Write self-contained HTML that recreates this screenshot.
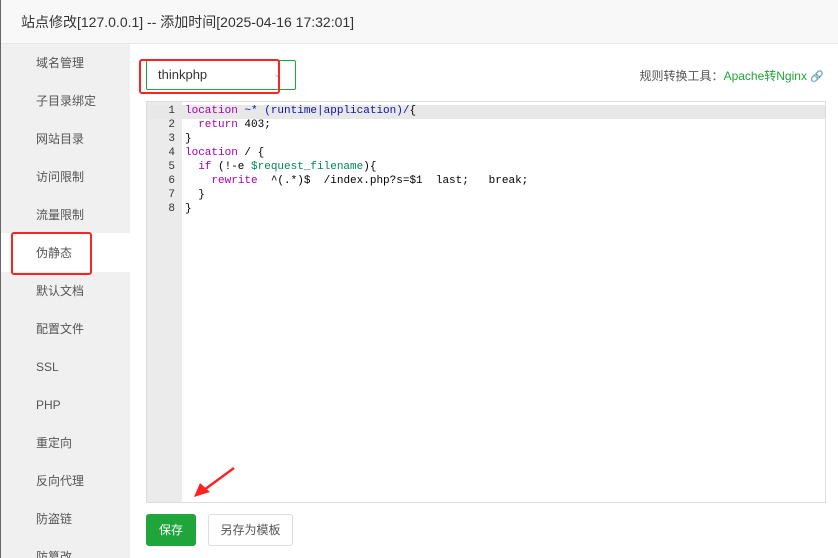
<!DOCTYPE html>
<html><head><meta charset="utf-8"><style>
*{margin:0;padding:0;box-sizing:border-box}
body{width:838px;height:558px;overflow:hidden;background:#fff;font-family:"Liberation Sans","Noto Sans CJK SC",sans-serif;position:relative}
.hdr{position:absolute;left:0;top:0;width:838px;height:44px;background:#f8f8f8;border-bottom:1px solid #e6e6e6;font-size:14px;color:#333;line-height:44px;padding-left:21px}
.edge{position:absolute;left:0;top:0;width:1px;height:558px;background:#666}
.side{position:absolute;left:1px;top:44px;width:129px;height:514px;background:#f0f0f0;overflow:hidden}
.side div{position:absolute;left:35px;font-size:12px;color:#555;line-height:14px}
.act{position:absolute;left:1px;top:233px;width:129px;height:39px;background:#fff}
.red{position:absolute;border:2px solid #f22;border-radius:3px}
.sel{position:absolute;left:146px;top:60px;width:150px;height:30px;border:1px solid #20a53a;border-radius:2px;font-size:13px;color:#333;line-height:28px;padding-left:11px}
.tool{position:absolute;right:14px;top:67px;font-size:12px;color:#555}
.tool span{color:#20a53a}
.ed{position:absolute;left:146px;top:101px;width:680px;height:402px;border:1px solid #ddd;background:#fff;font-family:"Liberation Mono",monospace;font-size:11px}
.gut{position:absolute;left:0;top:0;width:35px;height:100%;background:#ebebeb}
.ln{position:absolute;left:0;width:28px;text-align:right;color:#333}
.cl{position:absolute;left:38px;white-space:pre;color:#000}
.k{color:#a0a}.b{color:#11a}.v{color:#085}
.btn{position:absolute;top:514px;height:32px;border-radius:3px;font-size:12px;line-height:30px;text-align:center}
</style></head><body>
<div class="hdr">站点修改[127.0.0.1] -- 添加时间[2025-04-16 17:32:01]</div>
<div class="side"></div>
<div class="act"></div>
<div class="edge"></div>
<div class="side" style="background:none">
<div style="top:12px">域名管理</div>
<div style="top:50px">子目录绑定</div>
<div style="top:88px">网站目录</div>
<div style="top:126px">访问限制</div>
<div style="top:164px">流量限制</div>
<div style="top:202px">伪静态</div>
<div style="top:240px">默认文档</div>
<div style="top:278px">配置文件</div>
<div style="top:316px">SSL</div>
<div style="top:354px">PHP</div>
<div style="top:392px">重定向</div>
<div style="top:430px">反向代理</div>
<div style="top:468px">防盗链</div>
<div style="top:506px">防篡改</div>
</div>
<div class="red" style="left:11px;top:232px;width:81px;height:43px"></div>
<div class="sel">thinkphp<span style="position:absolute;left:126px;top:0;color:#bbb;font-size:10px">&#8964;</span></div>
<div class="red" style="left:139px;top:59px;width:141px;height:35px"></div>
<div class="tool">规则转换工具：<span>Apache转Nginx</span> <span style="font-size:11px">&#128279;</span></div>
<div class="ed">
<div class="gut"></div>
<div style="position:absolute;left:0;top:3px;width:678px;height:14px;background:#e8e8e8"></div>
<div class="ln" style="top:3px">1</div><div class="ln" style="top:17px">2</div><div class="ln" style="top:31px">3</div><div class="ln" style="top:45px">4</div><div class="ln" style="top:59px">5</div><div class="ln" style="top:73px">6</div><div class="ln" style="top:87px">7</div><div class="ln" style="top:101px">8</div>
<div class="cl" style="top:3px"><span class="k">location</span> <span class="b">~* (runtime|application)/</span>{</div>
<div class="cl" style="top:17px">  <span class="k">return</span> 403;</div>
<div class="cl" style="top:31px">}</div>
<div class="cl" style="top:45px"><span class="k">location</span> / {</div>
<div class="cl" style="top:59px">  <span class="k">if</span> (!-e <span class="v">$request_filename</span>){</div>
<div class="cl" style="top:73px">    <span class="k">rewrite</span>  ^(.*)$  /index.php?s=$1  last;   break;</div>
<div class="cl" style="top:87px">  }</div>
<div class="cl" style="top:101px">}</div>
</div>
<svg style="position:absolute;left:0;top:0" width="838" height="558"><line x1="234" y1="468" x2="204" y2="490" stroke="#f22" stroke-width="2.5"/><polygon points="194,497 200,483 210,492" fill="#f22"/></svg>
<div class="btn" style="left:146px;width:50px;background:#20a53a;color:#fff;border:1px solid #20a53a">保存</div>
<div class="btn" style="left:208px;width:85px;background:#fff;color:#555;border:1px solid #ddd">另存为模板</div>
</body></html>
